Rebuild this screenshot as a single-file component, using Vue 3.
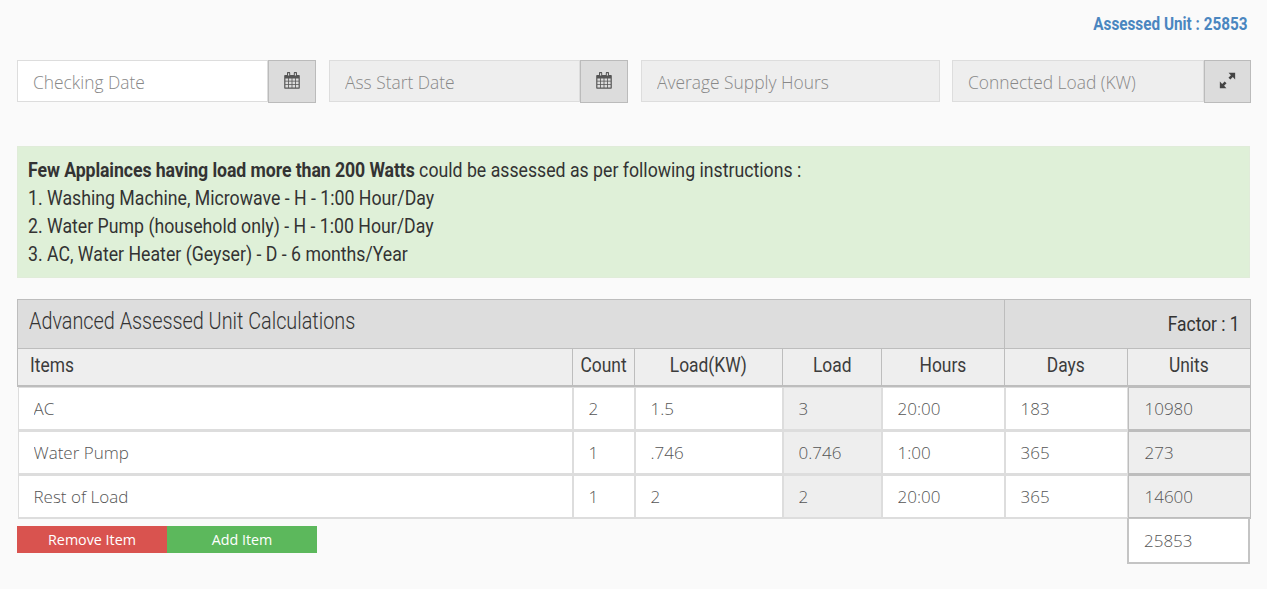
<script setup>
const fields = [
  { ph: 'Checking Date', icon: 'cal', off: false },
  { ph: 'Ass Start Date', icon: 'cal', off: true },
  { ph: 'Average Supply Hours', icon: '', off: true },
  { ph: 'Connected Load (KW)', icon: 'full', off: true }
]
const heads = [
  { t: 'Items', left: true }, { t: 'Count' }, { t: 'Load(KW)' }, { t: 'Load' },
  { t: 'Hours' }, { t: 'Days' }, { t: 'Units' }
]
const rows = [
  ['AC', '2', '1.5', '3', '20:00', '183', '10980'],
  ['Water Pump', '1', '.746', '0.746', '1:00', '365', '273'],
  ['Rest of Load', '1', '2', '2', '20:00', '365', '14600']
]
const lines = [
  '1. Washing Machine, Microwave - H - 1:00 Hour/Day',
  '2. Water Pump (household only) - H - 1:00 Hour/Day',
  '3. AC, Water Heater (Geyser) - D - 6 months/Year'
]
</script>

<template>
  <div class="page">
    <div class="unit"><span class="cond unit-text">Assessed Unit : 25853</span></div>

    <div class="fields">
      <div v-for="f in fields" :key="f.ph" class="field" :class="{ off: f.off }">
        <input class="field-input" :placeholder="f.ph" :readonly="f.off" />
        <span v-if="f.icon" class="addon" :class="{ wide: f.icon === 'full' }">
          <svg v-if="f.icon === 'cal'" width="16" height="17" viewBox="0 0 16 17">
            <path fill="#555" d="M3 1.2a1.6 1.6 0 0 1 3.2 0V3H9.800V1.200a1.600 1.600 0 0 1 3.200 0V3H15a.8.8 0 0 1 .8.8V16a.8.8 0 0 1-.8.8H1a.8.8 0 0 1-.8-.8V3.800A.8.8 0 0 1 1 3h2zM4 1.200V3.400h1.200V1.200zM10.800 1.200V3.400H12V1.200z"/>
            <path fill="#dcdcdc" d="M1.400 6.400h2.800v2.400H1.400zM5 6.400h2.600v2.400H5zM8.400 6.400H11v2.400H8.400zM11.800 6.400h2.800v2.400h-2.800zM1.400 9.600h2.800V12H1.400zM5 9.600h2.600V12H5zM8.400 9.600H11V12H8.400zM11.800 9.600h2.800V12h-2.800zM1.400 12.800h2.800v2.600H1.400zM5 12.800h2.600v2.600H5zM8.400 12.800H11v2.600H8.400zM11.800 12.800h2.800v2.600h-2.800z"/>
          </svg>
          <svg v-else width="17" height="17" viewBox="0 0 16 16">
            <path fill="#444" d="M9 .8h6.200V7l-2.200-2.200-2.300 2.300-1.800-1.800L11.200 3zM7 15.200H.8V9L3 11.200l2.300-2.300 1.800 1.800L4.800 13z"/>
          </svg>
        </span>
      </div>
    </div>

    <div class="notice">
      <div><span class="cond wide-text"><b>Few Applainces having load more than 200 Watts</b> could be assessed as per following instructions :</span></div>
      <div v-for="l in lines" :key="l"><span class="cond wide-text">{{ l }}</span></div>
    </div>

    <table class="calc">
      <colgroup>
        <col class="c1" /><col class="c2" /><col class="c3" /><col class="c4" />
        <col class="c5" /><col class="c6" /><col class="c7" />
      </colgroup>
      <thead>
        <tr class="title">
          <th colspan="5" class="left"><span class="cond light">Advanced Assessed Unit Calculations</span></th>
          <th colspan="2" class="right"><span class="cond right-text">Factor : 1</span></th>
        </tr>
        <tr class="heads">
          <th v-for="h in heads" :key="h.t" :class="{ left: h.left }"><span class="cond" :class="{ mid: !h.left }">{{ h.t }}</span></th>
        </tr>
      </thead>
      <tbody>
        <tr v-for="r in rows" :key="r[0]">
          <td v-for="(v, i) in r" :key="i" :class="{ ro: i === 3, units: i === 6 }">
            <input class="cell" :value="v" readonly />
          </td>
        </tr>
      </tbody>
    </table>

    <div class="foot">
      <div class="btns">
        <button class="btn red">Remove Item</button>
        <button class="btn green">Add Item</button>
      </div>
      <input class="total" value="25853" readonly />
    </div>
  </div>
</template>

<style>
html, body { margin: 0; background: #fafafa; }
</style>

<style scoped>
.page {
  box-sizing: border-box;
  width: 1267px;
  height: 589px;
  padding: 0 17px;
  overflow: hidden;
  background: #fafafa;
  font-family: Roboto, sans-serif;
  color: #333;
}
.cond {
  display: inline-block;
  white-space: nowrap;
  transform: scaleX(.87);
  transform-origin: left center;
}
.wide-text { transform: scaleX(.885); }
.wide-text b { letter-spacing: -.1px; }
.unit {
  height: 60px;
  padding: 13px 2px 0 0;
  box-sizing: border-box;
  display: flex;
  justify-content: flex-end;
}
.unit-text {
  font-size: 18px;
  line-height: 21px;
  font-weight: 700;
  color: #4a86c0;
  transform: scaleX(.85);
  transform-origin: right center;
}
.fields { display: flex; gap: 13px; }
.field { display: flex; flex: none; width: 299px; height: 43px; }
.field:last-child { margin-left: -1px; }
.field-input {
  flex: 1;
  min-width: 0;
  box-sizing: border-box;
  height: 42px;
  padding: 2px 15px 0;
  border: 1px solid #ddd;
  background: #fff;
  font-family: "Open Sans", sans-serif;
  font-size: 17.4px;
  font-weight: 300;
  color: #555;
  outline: none;
}
.field-input::placeholder { color: #888; opacity: 1; }
.off .field-input { background: #eee; }
.addon {
  flex: none;
  box-sizing: border-box;
  width: 48px;
  display: flex;
  align-items: center;
  justify-content: center;
  padding-bottom: 3px;
  background: #dcdcdc;
  border: 1px solid #bbb;
}
.addon.wide { width: 47px; }

.notice {
  box-sizing: border-box;
  height: 132px;
  margin-top: 43px;
  padding: 9px 10px;
  width: 1233px;
  background: #dff0d8;
  border: 1px solid #e0ecd9;
  font-size: 20px;
  line-height: 28px;
  color: #333;
}

.calc {
  width: 1233px;
  margin-top: 21px;
  border-collapse: collapse;
  table-layout: fixed;
}
.c1 { width: 555px; } .c2 { width: 62px; } .c3 { width: 148px; } .c4 { width: 99px; }
.c5 { width: 123px; } .c6 { width: 123px; } .c7 { width: 123px; }
th {
  box-sizing: border-box;
  padding: 0;
  border: 1px solid #bdbdbd;
  font-weight: 400;
  text-align: center;
}
.title th { height: 49px; background: #ddd; }
.light { font-size: 23px; font-weight: 300; color: #333; transform: scaleX(.862); }
.title .left { text-align: left; padding: 0 0 5px 11px; }
.title .right { text-align: right; padding-right: 10px; }
.right-text { font-size: 20px; color: #333; transform-origin: right center; }
.heads th { height: 37px; padding-bottom: 3px; background: #eee; font-size: 20px; color: #3c3c3c; border-bottom-width: 2px; }
.heads th.left { text-align: left; padding-left: 12px; }
.mid { transform-origin: center center; }
td { padding: 0; height: 44px; }
.cell {
  display: block;
  box-sizing: border-box;
  width: 100%;
  height: 100%;
  min-height: 43px;
  padding: 0 15px;
  border: 1px solid #ddd;
  border-bottom-width: 2px;
  background: #fff;
  font-family: "Open Sans", sans-serif;
  font-size: 17px;
  font-weight: 300;
  color: #555;
  outline: none;
}
.ro .cell { background: #eee; }
.units .cell { background: #eee; border-color: #bdbdbd; padding-left: 16px; }
.foot {
  display: flex;
  justify-content: space-between;
  align-items: flex-start;
}
.btns { display: flex; padding-top: 7px; }
.btn {
  width: 150px;
  height: 27px;
  border: 0;
  padding: 0;
  color: #fff;
  font-family: "Open Sans", sans-serif;
  font-size: 14.3px;
}
.red { background: #d9534f; }
.green { background: #5cb85c; }
.total {
  box-sizing: border-box;
  width: 123px;
  height: 46px;
  margin-top: -1px;
  padding: 0 15px;
  border: 2px solid #c4c4c4;
  border-top-width: 1px;
  background: #fff;
  font-family: "Open Sans", sans-serif;
  font-size: 17px;
  font-weight: 300;
  color: #555;
  outline: none;
}
</style>
